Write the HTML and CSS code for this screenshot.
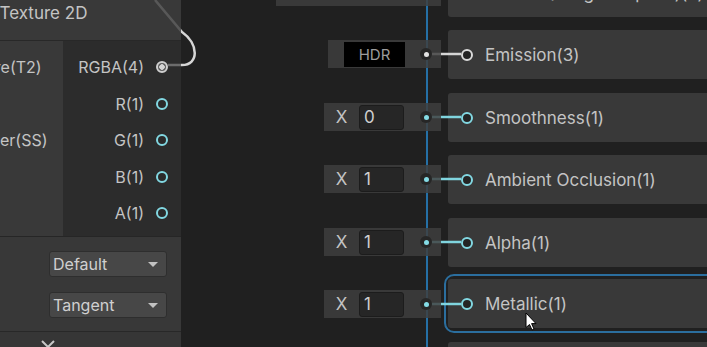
FILE: index.html
```html
<!DOCTYPE html>
<html lang="en">
<head>
    <meta charset="UTF-8">
    <title>Shader Graph</title>
    <link rel="stylesheet" href="styles.css">
</head>
<body>
    <div class="graph">
        <!-- master stack blocks -->
        <div class="block" style="top: -32px"><span class="block-port port-white"></span>Normal (Tangent Space)(3)</div>
        <div class="block" style="top: 30px"><span class="block-port port-white"></span>Emission(3)</div>
        <div class="block" style="top: 93px"><span class="block-port port-cyan"></span>Smoothness(1)</div>
        <div class="block" style="top: 155px"><span class="block-port port-cyan"></span>Ambient Occlusion(1)</div>
        <div class="block" style="top: 218px"><span class="block-port port-cyan"></span>Alpha(1)</div>
        <div class="block selected" style="top: 279px"><span class="block-port port-cyan"></span>Metallic(1)</div>
        <div class="block" style="top: 342px"><span class="block-port port-cyan"></span>Specular(1)</div>

        <svg class="wires" width="707" height="347">
            <line class="flow" x1="427" y1="0" x2="427" y2="347"/>
            <path class="wire wire-white" d="M 168 65 L 182 65 C 199 65 199 44 182 32 L 155 0"/>
            <line class="wire wire-white" x1="430" y1="54" x2="461" y2="54"/>
            <line class="wire wire-cyan" x1="430" y1="117" x2="461" y2="117"/>
            <line class="wire wire-cyan" x1="430" y1="179" x2="461" y2="179"/>
            <line class="wire wire-cyan" x1="430" y1="242" x2="461" y2="242"/>
            <line class="wire wire-cyan" x1="430" y1="304" x2="461" y2="304"/>
        </svg>

        <!-- inline property boxes -->
        <div class="prop prop-vec" style="top: -22px; left: 276px; width: 165px"></div>
        <div class="prop prop-hdr" style="top: 40px">
            <span class="hdr-field">HDR</span>
            <span class="prop-port dot-white"></span>
        </div>
        <div class="prop prop-vec" style="top: 103px">
            <span class="axis">X</span><span class="num-field">0</span>
            <span class="prop-port dot-cyan"></span>
        </div>
        <div class="prop prop-vec" style="top: 165px">
            <span class="axis">X</span><span class="num-field">1</span>
            <span class="prop-port dot-cyan"></span>
        </div>
        <div class="prop prop-vec" style="top: 228px">
            <span class="axis">X</span><span class="num-field">1</span>
            <span class="prop-port dot-cyan"></span>
        </div>
        <div class="prop prop-vec" style="top: 290px">
            <span class="axis">X</span><span class="num-field">1</span>
            <span class="prop-port dot-cyan"></span>
        </div>

        <!-- sample texture node -->
        <div class="tex-node">
            <div class="node-title">Sample Texture 2D</div>
            <div class="node-ports">
                <div class="inputs">
                    <div class="in-row">Texture(T2)</div>
                    <div class="in-row">UV(2)</div>
                    <div class="in-row">Sampler(SS)</div>
                </div>
                <div class="outputs">
                    <div class="out-row">RGBA(4)<span class="out-port port-linked"></span></div>
                    <div class="out-row">R(1)<span class="out-port port-cyan"></span></div>
                    <div class="out-row">G(1)<span class="out-port port-cyan"></span></div>
                    <div class="out-row">B(1)<span class="out-port port-cyan"></span></div>
                    <div class="out-row">A(1)<span class="out-port port-cyan"></span></div>
                </div>
            </div>
            <div class="node-settings">
                <div class="dropdown">Default<span class="arrow"></span></div>
                <div class="dropdown">Tangent<span class="arrow"></span></div>
            </div>
            <div class="node-preview">
                <svg class="collapse" width="16" height="16" viewBox="0 0 16 16">
                    <path d="M2 2 L14 14 M14 2 L2 14" stroke="#c8c8c8" stroke-width="2" fill="none"/>
                </svg>
            </div>
        </div>

        <svg class="cursor" width="13" height="20" viewBox="0 0 13 20">
            <path d="M1 1 L1 15.5 L4.5 12.5 L7 18 L9 17 L6.6 11.6 L11 11.6 Z" fill="#ffffff" stroke="#000000" stroke-width="1"/>
        </svg>
    </div>
</body>
</html>
```

FILE: styles.css
```css
body {
    margin: 0;
    background-color: #202020;
    font-family: Inter, "Noto Sans", sans-serif;
    color: #c4c4c4;
    overflow: hidden;
}
.graph {
    position: relative;
    width: 707px;
    height: 347px;
    overflow: hidden;
}
.wires {
    position: absolute;
    top: 0;
    left: 0;
    z-index: 2;
}
.flow {
    stroke: #2570a6;
    stroke-width: 2;
}
.wire {
    fill: none;
    stroke-width: 2.5;
}
.wire-white { stroke: #d6d6d6; }
.wire-cyan { stroke: #80d5df; }

/* master stack blocks */
.block {
    position: absolute;
    left: 448px;
    width: 270px;
    height: 49px;
    box-sizing: border-box;
    background-color: #393939;
    border-radius: 3px;
    display: flex;
    align-items: center;
    font-size: 17px;
    white-space: nowrap;
    z-index: 1;
}
.block-port, .out-port {
    width: 12px;
    height: 12px;
    box-sizing: border-box;
    border: 2px solid;
    border-radius: 50%;
    flex-shrink: 0;
}
.block-port {
    background-color: #242424;
    margin-left: 13px;
    margin-right: 12px;
}
.out-port {
    background-color: #2a2a2a;
}
.port-white { border-color: #dadada; }
.port-cyan { border-color: #82d8e2; }
.block.selected::before {
    content: "";
    position: absolute;
    top: -5px; left: -4px; right: -4px; bottom: -5px;
    border: 2px solid #2b6e9e;
    border-radius: 10px;
}

/* inline property boxes */
.prop {
    position: absolute;
    left: 324px;
    width: 117px;
    height: 28px;
    box-sizing: border-box;
    background-color: rgba(63, 63, 63, 0.83);
    display: flex;
    align-items: center;
    z-index: 3;
}
.prop-hdr {
    left: 328px;
    width: 113px;
    padding-left: 16px;
}
.hdr-field {
    width: 61px;
    height: 25px;
    background-color: #000;
    color: #9c9c9c;
    font-size: 15px;
    display: flex;
    align-items: center;
    justify-content: center;
    margin-right: 15px;
}
.axis {
    width: 35px;
    text-align: center;
    font-size: 17px;
}
.num-field {
    width: 45px;
    height: 25px;
    box-sizing: border-box;
    background-color: #262626;
    border: 1px solid #1c1c1c;
    border-radius: 3px;
    padding-left: 4px;
    font-size: 17px;
    line-height: 23px;
    color: #d0d0d0;
    margin-right: 16px;
}
.prop-port {
    width: 12px;
    height: 12px;
    border-radius: 50%;
    background-color: #262626;
    display: flex;
    align-items: center;
    justify-content: center;
}
.prop-port::after {
    content: "";
    width: 5px;
    height: 5px;
    border-radius: 50%;
}
.dot-white::after { background-color: #e2e2e2; }
.dot-cyan::after { background-color: #84dbe5; }

/* sample texture node */
.tex-node {
    position: absolute;
    top: 0;
    left: -100px;
    width: 281px;
    z-index: 3;
}
.node-title {
    height: 40px;
    background-color: rgba(63, 63, 63, 0.83);
    border-bottom: 1px solid #282828;
    padding-left: 35px;
    font-size: 17px;
    line-height: 26px;
    white-space: nowrap;
}
.node-ports {
    display: flex;
    height: 195px;
    border-bottom: 1px solid #262626;
}
.inputs {
    width: 163px;
    background-color: #393939;
    padding-top: 8px;
    padding-left: 53px;
    box-sizing: border-box;
}
.in-row {
    height: 36.5px;
    display: flex;
    align-items: center;
    font-size: 16px;
    white-space: nowrap;
}
.outputs {
    flex: 1;
    background-color: rgba(50, 50, 50, 0.65);
    padding-top: 8px;
    padding-right: 13px;
}
.out-row {
    height: 36.5px;
    display: flex;
    align-items: center;
    justify-content: flex-end;
    gap: 12px;
    font-size: 16px;
}
.port-linked {
    border-color: #cfcfcf;
    background: radial-gradient(circle, #d4d4d4 0 2.5px, #5c5c5c 3px);
}
.node-settings {
    height: 80px;
    background-color: #383838;
    border-bottom: 1px solid #282828;
    padding: 14px 14px 0 149px;
    display: flex;
    flex-direction: column;
    gap: 15px;
}
.dropdown {
    height: 26px;
    box-sizing: border-box;
    background-color: #474747;
    border: 1px solid #2e2e2e;
    border-radius: 3px;
    padding: 0 8px 0 3px;
    display: flex;
    align-items: center;
    justify-content: space-between;
    font-size: 16px;
    color: #d0d0d0;
}
.arrow {
    width: 0;
    height: 0;
    border-left: 5px solid transparent;
    border-right: 5px solid transparent;
    border-top: 5px solid #c2c2c2;
}
.node-preview {
    height: 40px;
    background-color: #363636;
    padding: 7px 0 0 140px;
    box-sizing: border-box;
}
.collapse {
    display: block;
}

.cursor {
    position: absolute;
    left: 525px;
    top: 312px;
    z-index: 5;
}
```
